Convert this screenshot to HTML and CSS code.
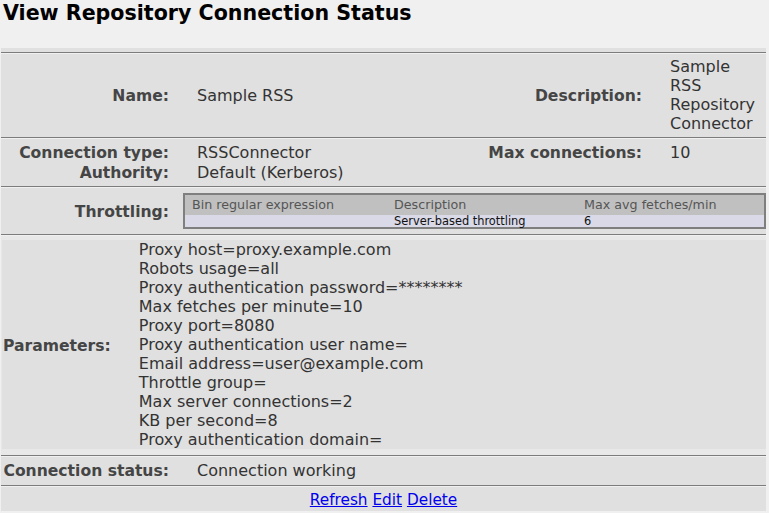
FILE: index.html
```html
<!DOCTYPE html>
<html>
<head>
<meta charset="utf-8">
<title>View Repository Connection Status</title>
<link rel="stylesheet" href="styles.css">
</head>
<body>
<h1 class="heading">View Repository Connection Status</h1>
<table class="display">
  <colgroup><col class="c1"><col class="c2"><col class="c3"><col class="c4"></colgroup>
  <tr><td class="sep" colspan="4"><hr></td></tr>
  <tr class="first-row">
    <td class="label">Name:</td>
    <td class="value">Sample RSS</td>
    <td class="label">Description:</td>
    <td class="value narrow">Sample RSS Repository Connector</td>
  </tr>
  <tr><td class="sep" colspan="4"><hr></td></tr>
  <tr>
    <td class="label">Connection type:</td>
    <td class="value">RSSConnector</td>
    <td class="label">Max connections:</td>
    <td class="value">10</td>
  </tr>
  <tr>
    <td class="label">Authority:</td>
    <td class="value" colspan="3">Default (Kerberos)</td>
  </tr>
  <tr><td class="sep" colspan="4"><hr></td></tr>
  <tr>
    <td class="label">Throttling:</td>
    <td class="box" colspan="3">
      <table class="throttle">
        <colgroup><col class="t1"><col class="t2"><col class="t3"></colgroup>
        <tr class="thead">
          <td class="th">Bin regular expression</td>
          <td class="th">Description</td>
          <td class="th">Max avg fetches/min</td>
        </tr>
        <tr class="trow">
          <td class="tc"></td>
          <td class="tc">Server-based throttling</td>
          <td class="tc">6</td>
        </tr>
      </table>
    </td>
  </tr>
  <tr><td class="sep sep-before" colspan="4"><hr></td></tr>
  <tr>
    <td class="params" colspan="4">
      <table class="paramtable">
        <tr>
          <td class="plabel">Parameters:</td>
          <td class="pvalue">Proxy host=proxy.example.com<br>Robots usage=all<br>Proxy authentication password=********<br>Max fetches per minute=10<br>Proxy port=8080<br>Proxy authentication user name=<br>Email address=user@example.com<br>Throttle group=<br>Max server connections=2<br>KB per second=8<br>Proxy authentication domain=</td>
        </tr>
      </table>
    </td>
  </tr>
  <tr><td class="sep sep-after" colspan="4"><hr></td></tr>
  <tr class="status-row">
    <td class="label">Connection status:</td>
    <td class="value" colspan="3">Connection working</td>
  </tr>
  <tr><td class="sep" colspan="4"><hr></td></tr>
  <tr>
    <td class="links" colspan="4"><a href="#">Refresh</a> <a href="#">Edit</a> <a href="#">Delete</a></td>
  </tr>
</table>
</body>
</html>
```

FILE: styles.css
```css
body {
  margin: 0;
  background: #f0f0f0;
  font-family: "DejaVu Sans", Verdana, sans-serif;
  font-size: 16px;
  line-height: 19px;
  color: #333;
}

.heading {
  margin: 0;
  padding: 1px 3px 0;
  font-size: 20.6px;
  line-height: 25px;
  font-weight: bold;
  color: #000;
}

.display {
  margin: 22px 0 0 1px;
  width: 765px;
  table-layout: fixed;
  border-collapse: separate;
  border-spacing: 0;
  background: #e0e0e0;
}

.c1 { width: 182px; }
.c2 { width: 237px; }
.c3 { width: 236px; }
.c4 { width: 110px; }

.label {
  padding: 2px 14px 0 2px;
  line-height: 18px;
  text-align: right;
  vertical-align: middle;
  font-size: 15.6px;
  font-weight: bold;
  color: #454545;
  white-space: nowrap;
}

.value {
  padding: 1px 2px 0 14px;
  vertical-align: middle;
  color: #333;
}

.value.narrow {
  padding-right: 6px;
}

.first-row .value {
  padding-top: 0;
}

.status-row .label,
.status-row .value {
  padding-bottom: 1px;
}

.sep {
  padding: 0;
}

.sep hr {
  display: block;
  margin: 4px 0 3px;
  height: 0;
  border: 0;
  border-top: 1px solid #7c7c7c;
  border-bottom: 1px solid #f0f0f0;
}

.sep-before hr {
  margin-bottom: 0;
}

.sep-after hr {
  margin-top: 0;
}

.box {
  padding: 2px 0 1px;
  vertical-align: middle;
}

.throttle {
  width: 583px;
  table-layout: fixed;
  border-collapse: separate;
  border-spacing: 0;
  border: 2px solid #7f7f7f;
}

.t1 { width: 202px; }
.t2 { width: 190px; }
.t3 { width: 187px; }

.th {
  padding: 0 0 0 7px;
  height: 20px;
  line-height: 20px;
  background: #c0c0c0;
  color: #555;
  font-size: 12.7px;
  text-align: left;
  white-space: nowrap;
}

.tc {
  padding: 0 0 0 7px;
  height: 12px;
  line-height: 12px;
  background: #d9d9e8;
  color: #111;
  font-size: 11.4px;
  white-space: nowrap;
}

.params {
  padding: 4px 0 6px 1px;
  background: #e8e8e8;
}

.paramtable {
  width: 100%;
  border-collapse: separate;
  border-spacing: 0;
  background: #e0e0e0;
}

.plabel {
  width: 1px;
  padding: 4px 14px 0 1px;
  vertical-align: middle;
  font-size: 15.6px;
  font-weight: bold;
  color: #454545;
  white-space: nowrap;
}

.pvalue {
  padding: 0 0 0 14px;
  vertical-align: middle;
  color: #333;
  white-space: nowrap;
}

.links {
  padding: 1px 0;
  text-align: center;
  font-size: 15.3px;
}

.links a {
  color: #0000ee;
}
```
